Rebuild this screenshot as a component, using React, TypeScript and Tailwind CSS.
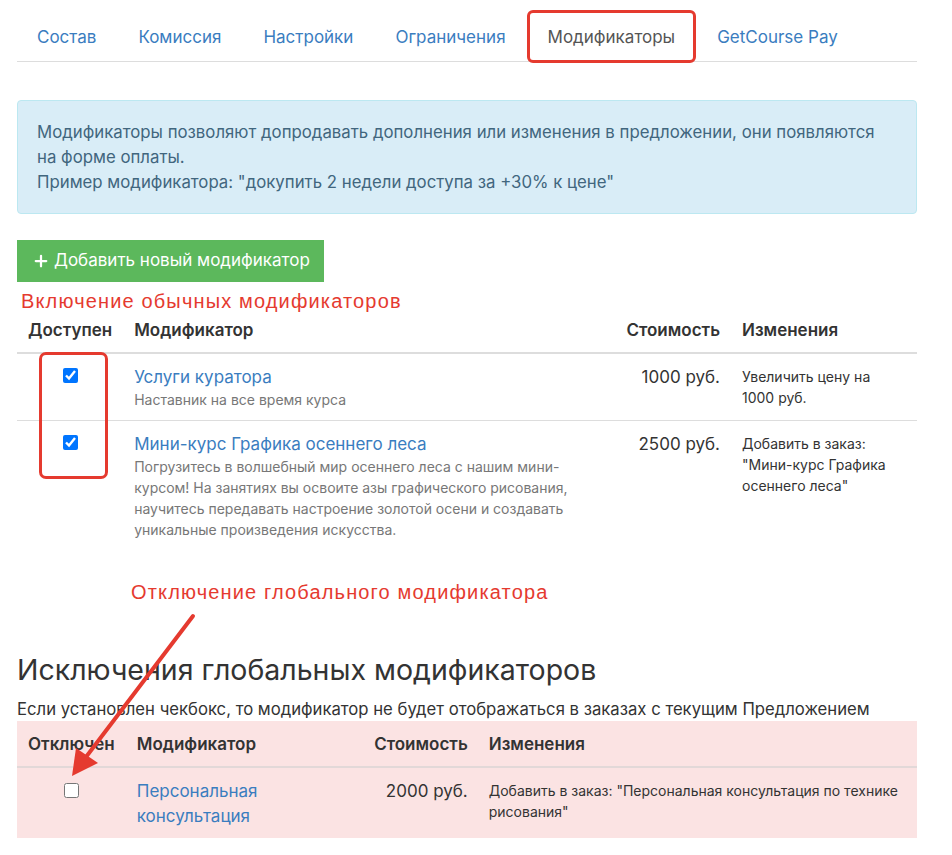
import { Plus } from "lucide-react";

const tabs = ["Состав", "Комиссия", "Настройки", "Ограничения", "Модификаторы", "GetCourse Pay"];

const Tabs = () => (
  <ul className="flex border-b border-[#ddd] pt-[11px]">
    {tabs.map((t) =>
      t === "Модификаторы" ? (
        <li key={t} className="relative -mb-px mr-[2px]">
          <span className="block rounded-t-[4px] border border-[#ddd] border-b-white bg-white px-[19px] pt-[12px] pb-[10px] leading-[26px] text-[#555]">
            {t}
          </span>
          <span className="pointer-events-none absolute -inset-x-px -top-px -bottom-px rounded-[6px] border-[3px] border-[#e53a2f]" />
        </li>
      ) : (
        <li key={t} className="mr-[2px]">
          <span className="block px-5 pt-[13px] pb-[11px] leading-[26px] text-[#3a7dbf]">{t}</span>
        </li>
      )
    )}
  </ul>
);

const Note = ({ children, className }: { children: string; className?: string }) => (
  <div
    className={`text-[20px] leading-[22px] tracking-[1.15px] text-[#e53a2f] ${className ?? ""}`}
    style={{ fontFamily: '"Liberation Sans", Arial, sans-serif' }}
  >
    {children}
  </div>
);

const mods = [
  {
    title: "Услуги куратора",
    desc: "Наставник на все время курса",
    price: "1000 руб.",
    change: "Увеличить цену на 1000 руб.",
  },
  {
    title: "Мини-курс Графика осеннего леса",
    desc: "Погрузитесь в волшебный мир осеннего леса с нашим мини-курсом! На занятиях вы освоите азы графического рисования, научитесь передавать настроение золотой осени и создавать уникальные произведения искусства.",
    price: "2500 руб.",
    change: 'Добавить в заказ: "Мини-курс Графика осеннего леса"',
  },
];

export default function App() {
  return (
    <div
      className="relative min-h-[855px] bg-white text-[17px] text-[#333]"
      style={{ fontFamily: 'Inter, "Noto Sans", sans-serif' }}
    >
      <div className="mx-[17px] w-[900px] pb-8">
        <Tabs />

        <div className="mt-[38px] rounded-[4px] border border-[#bce8f1] bg-[#d9edf7] px-[19px] pt-[19px] pb-[18px] text-[16.8px] leading-[25px] text-[#41667e]">
          Модификаторы позволяют допродавать дополнения или изменения в предложении, они появляются на форме оплаты.
          <br />
          Пример модификатора: "докупить 2 недели доступа за +30% к цене"
        </div>

        <button className="mt-[26px] flex h-[42px] items-center gap-[4px] bg-[#5cb85c] pl-[15px] pr-[14px] text-[17px] text-white">
          <Plus className="h-[18px] w-[18px]" strokeWidth={3} />
          Добавить новый модификатор
        </button>

        <Note className="mt-[8px] ml-[4px]">Включение обычных модификаторов</Note>

        <table className="w-full border-collapse">
          <thead>
            <tr className="border-b-2 border-[#ddd]">
              <th className="w-[104px] px-[11px] pt-[6px] pb-[10px] text-left font-semibold leading-[24px]">Доступен</th>
              <th className="px-[11px] pt-[6px] pb-[10px] text-left font-semibold leading-[24px]">Модификатор</th>
              <th className="w-[128px] px-[11px] pt-[6px] pb-[10px] text-right font-semibold leading-[24px]">Стоимость</th>
              <th className="w-[186px] px-[11px] pt-[6px] pb-[10px] text-left font-semibold leading-[24px]">Изменения</th>
            </tr>
          </thead>
          <tbody>
            {mods.map((m, i) => (
              <tr key={m.title} className={i === 0 ? "border-b border-[#ddd]" : ""}>
                <td className="relative px-[11px] pt-[14px] pb-[10px] align-top">
                  <div className="flex justify-center">
                    <input type="checkbox" defaultChecked className="h-[15px] w-[15px] accent-[#0075ff]" />
                  </div>
                  {i === 0 && (
                    <span className="pointer-events-none absolute left-[22px] top-[-2px] h-[127px] w-[69px] rounded-[7px] border-[3px] border-[#e53a2f]" />
                  )}
                </td>
                <td className="px-[11px] pt-[11px] pb-[10px] align-top">
                  <div className="leading-[24px] text-[#3a7dbf]">{m.title}</div>
                  <div className="text-[14px] leading-[21px] text-[#777]">{m.desc}</div>
                </td>
                <td className="px-[11px] pt-[11px] text-right align-top leading-[24px]">{m.price}</td>
                <td className="px-[11px] pt-[12px] align-top text-[14px] leading-[21px]">{m.change}</td>
              </tr>
            ))}
          </tbody>
        </table>

        <Note className="mt-[31px] ml-[114px]">Отключение глобального модификатора</Note>

        <h2 className="mt-[49px] text-[28.5px] leading-[36px] text-[#333]">Исключения глобальных модификаторов</h2>
        <p className="mt-[9px] text-[16.7px] leading-[24px]">
          Если установлен чекбокс, то модификатор не будет отображаться в заказах с текущим Предложением
        </p>

        <table className="w-full border-collapse bg-[#fbe3e3]">
          <thead>
            <tr className="border-b-2 border-[#e2d8d8]">
              <th className="w-[108px] px-[11px] pt-[11px] pb-[10px] text-left font-semibold leading-[24px]">Отключен</th>
              <th className="w-[236px] px-[11px] pt-[11px] pb-[10px] text-left font-semibold leading-[24px]">Модификатор</th>
              <th className="w-[117px] px-[11px] pt-[11px] pb-[10px] text-right font-semibold leading-[24px]">Стоимость</th>
              <th className="px-[10px] pt-[11px] pb-[10px] text-left font-semibold leading-[24px]">Изменения</th>
            </tr>
          </thead>
          <tbody>
            <tr>
              <td className="px-[11px] pt-[15px] pb-[9px] align-top">
                <div className="flex justify-center">
                  <input type="checkbox" className="h-[15px] w-[15px]" />
                </div>
              </td>
              <td className="px-[11px] pt-[11px] pb-[9px] align-top leading-[25px] text-[#3a7dbf]">
                Персональная консультация
              </td>
              <td className="px-[11px] pt-[11px] text-right align-top leading-[25px]">2000 руб.</td>
              <td className="px-[10px] pt-[12px] align-top text-[14px] leading-[21px]">
                Добавить в заказ: "Персональная консультация по технике рисования"
              </td>
            </tr>
          </tbody>
        </table>
      </div>

      <svg className="pointer-events-none absolute left-0 top-0" width="952" height="855" viewBox="0 0 952 855">
        <line x1="193" y1="616" x2="86" y2="757" stroke="#e53a2f" strokeWidth="4" strokeLinecap="round" />
        <polygon points="72,776 76,748 98,763" fill="#e53a2f" />
      </svg>
    </div>
  );
}
